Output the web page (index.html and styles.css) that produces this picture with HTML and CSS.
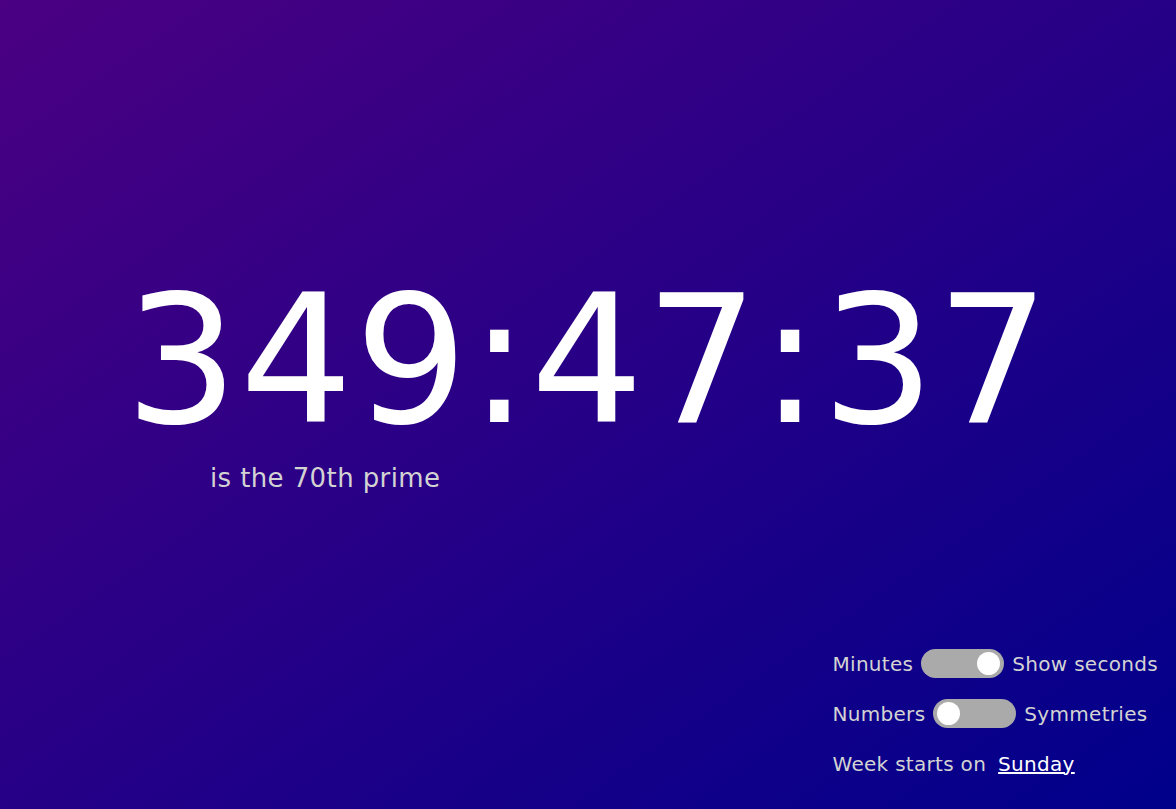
FILE: index.html
```html
<!DOCTYPE html>
<html lang="en">
<head>
<meta charset="utf-8">
<title>Prime clock</title>
<link rel="stylesheet" href="styles.css">
</head>
<body>
<main class="page">
  <section class="clock-area">
    <div class="clock-block">
      <div class="clock">349:47:37</div>
      <div class="fact">is the 70th prime</div>
    </div>
  </section>
  <section class="controls">
    <div class="row">
      <span>Minutes</span>
      <span class="toggle on"><span class="knob"></span></span>
      <span>Show seconds</span>
    </div>
    <div class="row">
      <span>Numbers</span>
      <span class="toggle"><span class="knob"></span></span>
      <span>Symmetries</span>
    </div>
    <div class="row week">
      <span>Week starts on</span>
      <a class="link" href="#">Sunday</a>
    </div>
  </section>
</main>
</body>
</html>
```
FILE: styles.css
```css
html, body {
  margin: 0;
  padding: 0;
  height: 100%;
}
body {
  background: linear-gradient(to bottom right, #4b0082, #00008b);
  font-family: "DejaVu Sans", Verdana, sans-serif;
  color: #d3d3d3;
  overflow: hidden;
}
.page {
  height: 100vh;
  display: flex;
  flex-direction: column;
}
.clock-area {
  flex: 1;
  display: flex;
  justify-content: center;
  padding-top: 272px;
}
.clock-block {
  display: flex;
  flex-direction: column;
}
.clock {
  font-size: 178px;
  line-height: 1;
  letter-spacing: 1.5px;
  color: #ffffff;
  white-space: nowrap;
}
.fact {
  font-size: 26px;
  line-height: 1;
  letter-spacing: 0.4px;
  margin-top: 15px;
  margin-left: 85px;
}
.controls {
  align-self: flex-end;
  padding: 0 18px 31px 0;
  display: flex;
  flex-direction: column;
  gap: 21px;
  font-size: 20px;
  letter-spacing: 0.3px;
}
.row {
  display: flex;
  align-items: center;
  gap: 8px;
  min-height: 29px;
  white-space: nowrap;
}
.week {
  gap: 12px;
}
.toggle {
  width: 83px;
  height: 29px;
  border-radius: 15px;
  background: #aaaaaa;
  display: flex;
  align-items: center;
  padding: 0 4px;
  box-sizing: border-box;
}
.toggle.on {
  justify-content: flex-end;
}
.knob {
  width: 23px;
  height: 23px;
  border-radius: 50%;
  background: #ffffff;
}
.link {
  color: #ffffff;
  text-decoration: underline;
}
```
